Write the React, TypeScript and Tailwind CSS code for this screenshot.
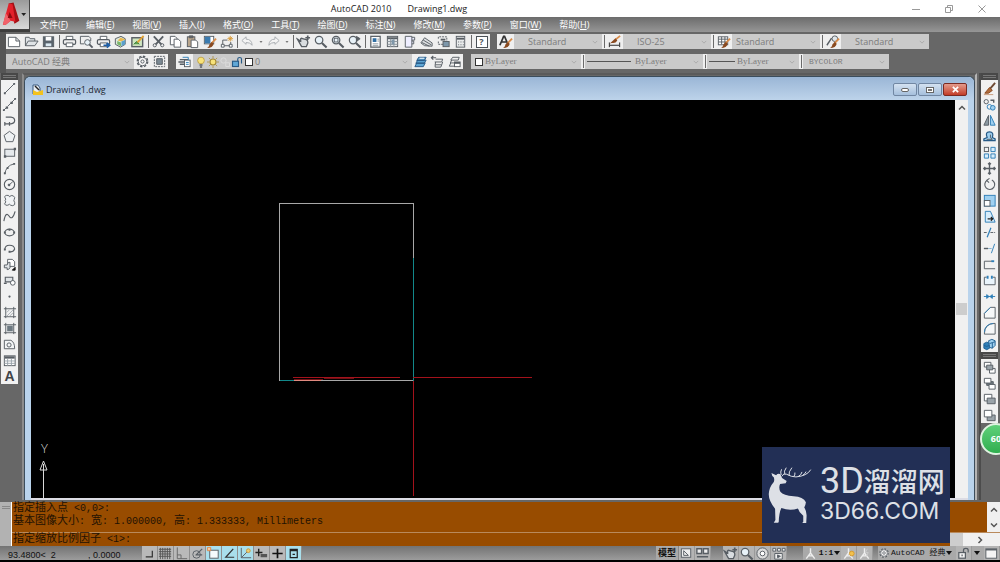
import type { ReactNode } from "react";
import clsx from "clsx";

type Tool = { name: string; icon: ReactNode };

const INK = "#585e64";
const BLUE = "#2f7fb8";
const SKY = "#9fd0f0";
const BROWN = "#8a4a20";

// small shared bits for the icons
const lens = (
  <>
    <circle cx="6.500" cy="6.500" r="4" fill="#e8f2f8" strokeWidth="1.300" />
    <path d="M9.500 9.500l5 5" strokeWidth="2.200" />
  </>
);
const brush = (
  <>
    <path d="M15 5l-5 5" stroke="#d98c4a" strokeWidth="2" />
    <path d="M10.500 8.500l2 2q-1 4.500-7 4.500 2.500-2 2.500-4z" fill={BROWN} stroke="none" />
  </>
);

const fileTools: Tool[] = [
  { name: "New", icon: <path d="M1.500 3.500h8l4 4v6h-12z M9.500 3.500v4h4" fill="#fff" /> },
  {
    name: "Open",
    icon: <path d="M1.500 12.500v-9h4l1 1.500h5v2.500 M1.500 12.500l3-5h10.500l-3.500 5z" fill="#dfe3e6" />,
  },
  {
    name: "Save",
    icon: (
      <>
        <rect x="2.500" y="3" width="11" height="10.500" fill="#59636c" />
        <path d="M5 3h6v4H5z" fill="#fff" stroke="none" />
        <path d="M5 10h6v3H5z" fill="#dbe9f2" stroke="none" />
      </>
    ),
  },
];

const printer = (
  <>
    <path d="M4.500 6V2.500h7V6" fill="#fff" />
    <rect x="1.500" y="6" width="13" height="5" rx="1.500" fill="#eee" strokeWidth="1.300" />
    <path d="M4.500 9.500h7v4h-7z" fill="#fff" />
  </>
);

const plotTools: Tool[] = [
  { name: "Plot", icon: printer },
  {
    name: "Plot preview",
    icon: (
      <>
        <path d="M1.500 2.500h9l2 2v3 M1.500 2.500v8h4" fill="none" />
        <circle cx="9" cy="9" r="3" fill="#e8f2f8" />
        <path d="M11 11l3.500 3.500" strokeWidth="2" />
      </>
    ),
  },
  {
    name: "Publish",
    icon: (
      <>
        {printer}
        <path d="M8 12h5 M11.500 9.500l3 2.500-3 2.500" stroke="#1d5fa8" strokeWidth="1.800" />
      </>
    ),
  },
  {
    name: "3D print",
    icon: (
      <>
        <path d="M2.500 5l6-2.500L13 5v6l-5 3-5.500-3z" fill="#dfe9dc" />
        <path d="M5 7l3-3 5 1.500L9 8z" fill="#e9b94b" stroke="none" />
        <path d="M9 8l4-1.500V11l-4 2z" fill="#5aa0cc" stroke="none" />
        <path d="M4.500 7.500L8.500 9v4l-4-2z" fill="#79b56a" stroke="none" />
      </>
    ),
  },
  {
    name: "Markup",
    icon: (
      <>
        <rect x="2" y="4" width="11.500" height="9.500" fill="#cfe6c0" strokeWidth="1.500" />
        <path d="M4 11l3-3 3 3" fill="#5ba04a" stroke="#3d7d3d" />
        <path d="M14.500 2L8 9" stroke="#e1a235" strokeWidth="2" />
      </>
    ),
  },
];

const clipTools: Tool[] = [
  {
    name: "Cut",
    icon: (
      <>
        <path d="M3 2.500l8 8.500 M13 2.500l-8 8.500" strokeWidth="2" />
        <circle cx="4" cy="12" r="1.700" />
        <circle cx="12" cy="12" r="1.700" />
      </>
    ),
  },
  {
    name: "Copy",
    icon: (
      <>
        <path d="M2.500 2.500h5l2 2v7h-7z" fill="#fff" />
        <path d="M6.500 5.500h4.500l2.500 2.500v6h-7z" fill="#fff" />
      </>
    ),
  },
  {
    name: "Paste",
    icon: (
      <>
        <rect x="2.500" y="3" width="8" height="10.500" fill="#b9a58b" />
        <path d="M4.500 2h4v2h-4z" fill="#666" />
        <path d="M6.500 6.500h5l2 2v6h-7z" fill="#fff" />
      </>
    ),
  },
  {
    name: "Match properties",
    icon: (
      <>
        <rect x="2.500" y="2.500" width="10" height="8" fill="#fff" />
        <path d="M3 3h6v7H3z" fill="#3a7bb0" stroke="none" />
        {brush}
      </>
    ),
  },
  {
    name: "Block editor",
    icon: (
      <>
        <path d="M4 12.500v-6h5 M4 12.500h8.500v-4" />
        <path d="M2.500 11h3v3h-3z M11 11h3v3h-3z" fill="#fff" />
        <path d="M12 2v6 M9 5h6 M10 3l4 4 M14 3l-4 4" stroke="#d99a35" />
      </>
    ),
  },
];

const undoIcon = <path d="M2 7l4.500-4v2.500q6 0 6.500 6.500-2-3-6.500-3V11z" stroke="#a9adb1" fill="#f4f4f4" />;
const redoIcon = <path d="M14 7L9.500 3v2.500q-6 0-6.500 6.500 2-3 6.500-3V11z" stroke="#a9adb1" fill="#f4f4f4" />;

const panIcon = (
  <>
    <path d="M1.500 5.500l3.500 2V5q1-1 2 0l4 1q2 1 1.500 4l-1.500 3.500H6z" fill="#d9dde0" strokeWidth="1.400" />
    <path d="M12.500 1.500v5 M10 4h5" strokeWidth="1.800" />
  </>
);

const zoomTools: Tool[] = [
  { name: "Pan", icon: panIcon },
  { name: "Zoom realtime", icon: lens },
  { name: "Zoom window", icon: <>{lens}<rect x="4.500" y="4.500" width="4" height="4" /></> },
  { name: "Zoom previous", icon: <>{lens}<path d="M10 2.500l4 2.500-4 3z" fill={INK} /></> },
];

const paletteTools: Tool[] = [
  {
    name: "Properties",
    icon: (
      <>
        <rect x="3" y="2.500" width="10" height="11.500" fill="#fff" strokeWidth="1.300" />
        <path d="M5 4.500h4v4H5z" fill="#2f6ea3" stroke="none" />
        <path d="M10 5.500h2 M10 7.500h2 M5 10.500h6 M5 12.500h6" stroke="#8b959d" />
      </>
    ),
  },
  {
    name: "DesignCenter",
    icon: (
      <>
        <rect x="2.500" y="2.500" width="11" height="11" fill="#e5e8ea" />
        <path d="M2.500 4.500h11" strokeWidth="2" />
        <path d="M6 5v9 M9.500 5v9 M2.500 8h11 M2.500 11h11" stroke="#8b959d" />
        <path d="M7 6h3v5H7z" fill="#7f97aa" stroke="none" />
      </>
    ),
  },
  { name: "Tool palettes", icon: <path d="M3.500 2.500h7v11.500h-7z M10.500 3.500h3v3h-3 M10.500 7.500h2v3h-2" fill="#eef" /> },
  {
    name: "Sheet set",
    icon: (
      <>
        <path d="M2 9.500L6 4l8 5.500v3.500l-8-.5z" fill="#dcdfe1" />
        <path d="M4.500 6.500l8.500 5 M3 9l8 4" />
      </>
    ),
  },
  {
    name: "Markup set",
    icon: (
      <>
        <path d="M2.500 5v-2h9v5 M2.500 8v3h5" strokeDasharray="2 1" />
        <rect x="7.500" y="8" width="6.500" height="5.500" fill="#7d97aa" />
        <path d="M5 6h5" strokeWidth="2" />
      </>
    ),
  },
  {
    name: "Calculator",
    icon: (
      <>
        <rect x="3.500" y="2.500" width="9" height="11.500" fill="#e9ebec" />
        <path d="M4 4h8v2H4z" fill={INK} stroke="none" />
        <path d="M5.500 8.500h6 M5.500 11.500h6" strokeDasharray="1 1.500" />
      </>
    ),
  },
];

const drawTools: Tool[] = [
  { name: "Line", icon: <><path d="M3 13L13 3" /><path d="M2 12h2v2H2z M12 2h2v2h-2z" fill={INK} stroke="none" /></> },
  {
    name: "Construction line",
    icon: (
      <>
        <path d="M2 14L14 2" strokeDasharray="5 1" />
        <path d="M4 10h2.500v2.500H4z M9 5h2.500v2.500H9z M1 13h2v2H1z M13 1h2v2h-2z" fill={INK} stroke="none" />
      </>
    ),
  },
  { name: "Polyline", icon: <path d="M4 4.500h5.500q4 .5 4 3.500t-4 3.500H3 M3 9.500v4 M8 9.500v4" strokeWidth="1.300" /> },
  { name: "Polygon", icon: <path d="M8 2.500l5.800 4.300-2.200 6.700H4.400L2.200 6.800z" fill="#eef1f3" /> },
  {
    name: "Rectangle",
    icon: (
      <>
        <rect x="3" y="4.500" width="10.500" height="7.500" fill="#e5e9ec" />
        <path d="M2 11h2.500v2.500H2z M12.500 3H15v2.500h-2.500z" fill={INK} stroke="none" />
      </>
    ),
  },
  {
    name: "Arc",
    icon: (
      <>
        <path d="M3 14Q4 5 13 3" />
        <path d="M2 12h2v2H2z M5 6.500h2v2H5z M12 2h2v2h-2z" fill={INK} stroke="none" />
      </>
    ),
  },
  {
    name: "Circle",
    icon: (
      <>
        <circle cx="8" cy="8" r="5.500" fill="#f5f5f5" strokeWidth="1.200" />
        <path d="M7.500 8.500l4-3.500" />
        <circle cx="7.500" cy="8.500" r="1" fill={INK} />
      </>
    ),
  },
  {
    name: "Revision cloud",
    icon: (
      <path
        d="M4 6.500Q1.500 3 5 2.500q2.500-.5 3 1.500 1.500-2 4-1 2.500 1.500 1 4-1 1 .5 3 1 3-2 3.500-2.500 0-3.500-1.500-1.500 1.500-4 1Q1.500 12 4 9.500 2.500 8 4 6.500z"
        fill="#f1f3f5"
      />
    ),
  },
  { name: "Spline", icon: <path d="M2 13Q4 2 7.500 7.500T14 2.500" strokeWidth="1.200" /> },
  {
    name: "Ellipse",
    icon: (
      <>
        <ellipse cx="8" cy="8" rx="5" ry="3.500" strokeWidth="1.300" />
        <path d="M2 7h2v2H2z M7 4h2v2H7z M12 7h2v2h-2z" fill={INK} stroke="none" />
      </>
    ),
  },
  {
    name: "Ellipse arc",
    icon: (
      <>
        <path d="M3 9.500Q3 4.500 8 4.500t5.500 4Q12 12 8 11.500" strokeWidth="1.200" />
        <path d="M2 8h2v2H2z M7 10.500h2v2H7z" fill={INK} stroke="none" />
      </>
    ),
  },
  {
    name: "Insert block",
    icon: (
      <>
        <path d="M6 2.500h5l2.500 2.500v5H6z" fill="#fff" />
        <path d="M2.500 8.500h3q0-3 3-3v6q-1 2-3 2v-2h-3z" fill="#e0e4e7" />
        <path d="M11 14h3v-3z" fill="#111" stroke="#111" />
      </>
    ),
  },
  {
    name: "Make block",
    icon: (
      <>
        <path d="M3.500 4.500h8v5h-8z" fill="#e0e4e7" strokeWidth="1.200" />
        <circle cx="11.500" cy="10.500" r="2.500" fill="#fff" />
        <path d="M2 11h3" strokeWidth="1.500" />
      </>
    ),
  },
  { name: "Point", icon: <circle cx="8" cy="8" r="1.200" fill={INK} stroke="none" /> },
  {
    name: "Hatch",
    icon: (
      <>
        <path d="M4 2v12 M12.500 2v12 M2 4h13 M2 12.500h13" />
        <path d="M5 12l7-7 M5 8l3-3 M8 12l4-4" stroke="#a5acb1" />
      </>
    ),
  },
  {
    name: "Gradient",
    icon: (
      <>
        <path d="M4 2v12 M12.500 2v12 M2 4h13 M2 12.500h13" />
        <path d="M5.500 5h6v6h-6z" fill="#6c7880" stroke="none" />
      </>
    ),
  },
  {
    name: "Region",
    icon: (
      <>
        <path d="M2.500 3.500h7q4 2 4 9h-11z" fill="#f3f5f6" />
        <circle cx="7.500" cy="8.500" r="2.200" />
      </>
    ),
  },
  {
    name: "Table",
    icon: (
      <>
        <rect x="2.500" y="3" width="11.500" height="10.500" fill="#fff" />
        <path d="M3 3.500h10.500V6H3z" fill={INK} stroke="none" />
        <path d="M6 6v7.500 M10 6v7.500 M2.500 8.500H14 M2.500 11H14" stroke="#9aa4ab" />
      </>
    ),
  },
];

const modifyTools: Tool[] = [
  {
    name: "Erase",
    icon: (
      <>
        <path d="M14 2L8 9" stroke="#6e4a33" strokeWidth="2" />
        <path d="M8 7l3 3-4 3H3z" fill="#b06c3c" stroke={BROWN} />
        <path d="M2 14.500h10" stroke="#c79a7a" />
      </>
    ),
  },
  {
    name: "Copy object",
    icon: (
      <>
        <circle cx="4.500" cy="5" r="2.300" />
        <circle cx="8" cy="10.500" r="2.500" stroke={BLUE} />
        <circle cx="11.500" cy="11.500" r="2.500" stroke={BLUE} fill={SKY} />
        <path d="M9 3.500h3.500V6" strokeWidth="1.500" />
      </>
    ),
  },
  {
    name: "Mirror",
    icon: (
      <>
        <path d="M7 2.500v10.500H2z" fill="#8b98a1" />
        <path d="M9 2.500v10.500h5z" fill={SKY} stroke={BLUE} />
      </>
    ),
  },
  {
    name: "Offset",
    icon: (
      <>
        <path d="M2 12.500h12v-2l-3-1.500Q13 3 8 3T5.500 9L2 10.500z" fill={SKY} stroke="#275a86" strokeWidth="1.300" />
        <path d="M5 11h6q-3-1-2-5" />
      </>
    ),
  },
  {
    name: "Array",
    icon: (
      <>
        <rect x="2.500" y="2.500" width="4.500" height="4.500" />
        <path d="M9.500 2.500H14V7H9.500z M2.500 9.500H7V14H2.500z M9.500 9.500H14V14H9.500z" stroke={BLUE} fill="#d8edfb" />
      </>
    ),
  },
  {
    name: "Move",
    icon: (
      <path
        d="M8 2v12 M2 8h12 M6.500 3.500L8 2l1.500 1.500 M6.500 12.500L8 14l1.500-1.500 M3.500 6.500L2 8l1.500 1.500 M12.500 6.500L14 8l-1.500 1.500"
        strokeWidth="1.500"
      />
    ),
  },
  { name: "Rotate", icon: <path d="M5.500 3.500a5.300 5.300 0 105-.3 M8 1.500L5 3.500 7.500 6" strokeWidth="1.200" /> },
  {
    name: "Scale",
    icon: (
      <>
        <rect x="2.500" y="2.500" width="11.500" height="11.500" stroke={BLUE} fill={SKY} />
        <rect x="2.500" y="8" width="6" height="6" fill="#fff" />
      </>
    ),
  },
  {
    name: "Stretch",
    icon: (
      <>
        <path d="M3.500 2.500H9L14 14H3.500z" stroke={BLUE} fill="#d8edfb" />
        <path d="M6 10.500h5 M9.500 8.500l2 2-2 2" stroke="#222" strokeWidth="1.300" />
      </>
    ),
  },
  { name: "Trim", icon: <><path d="M2 8h4 M9 8h5" strokeDasharray="3 1" /><path d="M9.500 3L5.500 13" stroke={BLUE} strokeWidth="1.300" /></> },
  { name: "Extend", icon: <><path d="M2 8h4.500" strokeWidth="1.500" /><path d="M7 8h3" stroke={BLUE} strokeDasharray="1 1" /><path d="M13.500 3L10 13" stroke={BLUE} /></> },
  { name: "Break at point", icon: <><path d="M11 4.500H2.500v8H14" /><path d="M10 3.500h3v2h-3z" fill={BLUE} stroke="none" /></> },
  { name: "Break", icon: <><path d="M5 4.500H2.500v8H14v-8h-2.500" fill="#eaf4fb" /><path d="M5 3h2v3H5z M9.500 3h2v3h-2z" fill={BLUE} stroke="none" /></> },
  { name: "Join", icon: <path d="M2 8h12 M5 6l2.500 2L5 10z M11 6L8.500 8l2.500 2z" stroke={BLUE} fill={BLUE} /> },
  { name: "Chamfer", icon: <><path d="M2.500 14V9l6.500-6.500h5V14z" fill="#f5f7f8" /><path d="M2.500 9L9 2.500" stroke={BLUE} /></> },
  { name: "Fillet", icon: <><path d="M2.500 14q0-11.500 11.500-11.500V14z" fill="#f5f7f8" /><path d="M2.500 12Q3 3.500 12 2.500" stroke={BLUE} /></> },
  {
    name: "Explode",
    icon: (
      <>
        <path d="M2 7l3-1.500 3 1V12l-3 1.500L2 12z" fill={BLUE} stroke="#1f5f92" />
        <path d="M7 4l3.500-1.500L14 4v5l-3 3-3-1z" fill={SKY} stroke="#1f5f92" />
        <path d="M8 7l3-1 3-1 M11 6v6 M2 9l3 1 3-1" stroke="#1f5f92" />
      </>
    ),
  },
];

const orderTools: Tool[] = [
  {
    name: "Bring to front",
    icon: <><path d="M2.500 2.500h7v5h-7z M8 9h6v5H8z" fill="#fff" /><path d="M5 5.500h6.500v5H5z" fill="#9aa3a9" /></>,
  },
  {
    name: "Send to back",
    icon: <><path d="M5 6h7v4H5z" fill="#6f7980" /><path d="M2.500 2.500h7v5h-7z M7.500 9h6.500v5H7.500z" fill="#fff" /></>,
  },
  {
    name: "Bring above objects",
    icon: <><path d="M2.500 2.500h8v7h-8z" fill="#fff" /><path d="M5.500 6.500H14v6H5.500z" fill="#9aa3a9" /></>,
  },
  {
    name: "Send under objects",
    icon: <><path d="M5.500 7.500H14v6H5.500z" fill="#9aa3a9" /><path d="M2.500 2.500h8v7h-8z" fill="#fff" /></>,
  },
];

const gear = (
  <>
    <circle cx="8" cy="8" r="5.500" fill="#f6f6f6" strokeDasharray="2.500 1.800" strokeWidth="1.600" />
    <circle cx="8" cy="8" r="4.500" fill="#f6f6f6" />
    <circle cx="8" cy="8" r="1.700" />
  </>
);
const lock = (
  <>
    <rect x="3" y="7" width="7" height="6" fill="#f2f2f2" strokeWidth="1.300" />
    <path d="M8 7V4.500q0-2 2.500-2t2.500 2V7 M6.500 9v2" strokeWidth="1.300" />
  </>
);
const scaleFigure = <path d="M8 2.500V8 M8 7.500l-4.500 6 M8 7.500l4.500 6 M6 10.500h4" stroke="#eee" strokeWidth="1.500" />;

const layerIcon = (
  <>
    <path d="M3 6h9 M1.500 8.500h8 M3 11h6" strokeWidth="1.500" />
    <rect x="8" y="6.500" width="6" height="7" fill="#fff" />
    <path d="M9.500 9h3 M9.500 11h3 M6 3.500h6v3" stroke={BLUE} />
  </>
);

const layerTools: Tool[] = [
  {
    name: "Make object layer current",
    icon: (
      <>
        <path d="M6 3.500h8l-2 3.500H4z M5 6.500h9l-2 3.500H3z M4 9.500h9l-2 4H2z" fill="#5fa7d6" stroke="#275a86" />
        <path d="M7 4.500h5" stroke="#fff" />
      </>
    ),
  },
  {
    name: "Layer previous",
    icon: <><path d="M6 5.500h7.500l-1 3H5 M6 8.500l-.5 3h7l1-3 M5.500 11.500V14h6l1-2.500" /><path d="M1.500 4h5 M3.500 2L1.500 4l2 2" strokeWidth="1.300" /></>,
  },
  {
    name: "Layer states",
    icon: <><path d="M6 3.500h7l-1 3H4z M5 6.500L3.500 9.500H8 M4 9.500L2.500 13H8" /><rect x="8" y="8.500" width="6" height="5" fill="#fff" /><path d="M8 9.500h6" strokeWidth="2" /></>,
  },
];

const textStyleIcon = <path d="M2 12L6 2.500h1L11 12 M4 8.500h5" stroke="#333" strokeWidth="1.800" />;

const styleBoxes = [
  { name: "Text style", value: "Standard", pad: "pl-3.5", icon: <>{textStyleIcon}{brush}</> },
  {
    name: "Dimension style",
    value: "ISO-25",
    pad: "pl-3.5",
    icon: (
      <>
        <path d="M2.500 9v5 M13.500 9v5 M3 12h10" stroke="#222" />
        <path d="M14 2L9 6" stroke="#d98c4a" strokeWidth="2" />
        <path d="M9 4.500l2 2.500q-2 3.500-6 2.500l-2 .5z" fill={BROWN} stroke="none" />
      </>
    ),
  },
  {
    name: "Table style",
    value: "Standard",
    pad: "pl-1",
    icon: <><rect x="2.500" y="3" width="10" height="8.500" fill="#fff" /><path d="M2.500 5.500h10 M6 3v8 M9.500 3v8 M2.500 8.500h10" />{brush}</>,
  },
  {
    name: "Multileader style",
    value: "Standard",
    pad: "pl-3.5",
    icon: <><path d="M2 12L7 4.500" strokeWidth="1.500" /><circle cx="10.500" cy="5" r="3" fill="#dfe6ea" />{brush}</>,
  },
];

const menus = [
  ["文件", "F"],
  ["编辑", "E"],
  ["视图", "V"],
  ["插入", "I"],
  ["格式", "O"],
  ["工具", "T"],
  ["绘图", "D"],
  ["标注", "N"],
  ["修改", "M"],
  ["参数", "P"],
  ["窗口", "W"],
  ["帮助", "H"],
];

const modes: (Tool & { on?: boolean })[] = [
  { name: "Snap", icon: <path d="M4 11.500h7V5" stroke="#333" strokeWidth="1.300" /> },
  { name: "Grid", icon: <path d="M2.500 2v12 M5 2v12 M7.500 2v12 M10 2v12 M12.500 2v12 M1 3.500h13 M1 6h13 M1 8.500h13 M1 11h13" stroke="#555" /> },
  { name: "Ortho", icon: <path d="M3.500 1.500v12H14 M3.500 9.500h4v4" stroke="#666" /> },
  { name: "Polar", icon: <><circle cx="7" cy="9" r="4" /><path d="M6 10l7-7 M7 9.500h6" strokeWidth="1.300" /></> },
  { name: "Object snap", on: true, icon: <><rect x="4" y="4.500" width="9" height="8.500" fill="#f5fbfd" /><path d="M1.500 1.500H5V5H1.500z" stroke="#e08a4a" fill="#f6c9a2" /></> },
  { name: "Object snap tracking", on: true, icon: <path d="M12 3L4 12h9" stroke="#333" strokeWidth="1.300" /> },
  { name: "Dynamic UCS", on: true, icon: <><path d="M3.500 2v10.500H14 M3.500 12.500l6-6" /><circle cx="11" cy="5" r="2" fill="#e8cd7a" stroke="#d09a35" /></> },
  { name: "Dynamic input", icon: <><path d="M5 3v8 M1.500 7H9" stroke="#222" strokeWidth="1.500" /><path d="M7 8.500h7v3.500H7z" fill="#555" stroke="none" /></> },
  { name: "Lineweight", icon: <path d="M8 3v10 M2.500 8h11" stroke="#111" strokeWidth="1.800" /> },
  { name: "Quick properties", on: true, icon: <path d="M4.500 3.500h7.500v9H4.500z M4.500 5h7.500 M7 9h2.500" stroke="#222" strokeWidth="1.300" /> },
];

function Icon({ children, small }: { children: ReactNode; small?: boolean }) {
  return (
    <svg
      viewBox="0 0 16 16"
      className={clsx("shrink-0", small ? "size-3" : "size-[15px]")}
      fill="none"
      stroke={INK}
      aria-hidden="true"
    >
      {children}
    </svg>
  );
}

function IconButton({ tool, className }: { tool: Tool; className?: string }) {
  return (
    <button
      type="button"
      aria-label={tool.name}
      className={clsx("flex shrink-0 items-center justify-center hover:bg-white", className ?? "h-[15px] w-[17px]")}
    >
      <Icon>{tool.icon}</Icon>
    </button>
  );
}

function Tools({ items }: { items: Tool[] }) {
  return (
    <div className="flex">
      {items.map((it) => (
        <IconButton key={it.name} tool={it} />
      ))}
    </div>
  );
}

function Divider() {
  return (
    <div className="flex w-1 shrink-0 justify-center py-px">
      <span className="w-px bg-[#6a6a6a]" />
    </div>
  );
}

function Chevron() {
  return (
    <svg viewBox="0 0 8 8" className="pointer-events-none mr-1 size-1.5 shrink-0" fill="none" stroke="#a2a2a2">
      <path d="M1 2.500l3 3 3-3" />
    </svg>
  );
}

function Combo({
  label,
  value,
  className,
  children,
}: {
  label: string;
  value: string;
  className?: string;
  children?: ReactNode;
}) {
  return (
    <div className={clsx("flex h-[15px] shrink-0 items-center bg-[#cacaca] text-[#7c7c7c]", className)}>
      {children}
      <select aria-label={label} className="h-full min-w-0 flex-1 appearance-none bg-transparent leading-none">
        <option>{value}</option>
      </select>
      <Chevron />
    </div>
  );
}

function DropArrow({ name, dark }: { name: string; dark?: boolean }) {
  return (
    <button type="button" aria-label={name} className="flex w-[9px] shrink-0 items-center justify-center">
      <svg viewBox="0 0 6 4" className={dark ? "h-1 w-1.5" : "h-0.5 w-1"} fill={dark ? "#111" : "#777"}>
        <path d="M0 0h6L3 4z" />
      </svg>
    </button>
  );
}

function Header() {
  return (
    <header className="flex h-8 bg-[#3d3d3d]">
      <button
        type="button"
        aria-label="Application menu"
        className="flex h-[30px] w-[30px] shrink-0 items-center border-r border-b border-[#444] bg-linear-to-b from-[#9a9a9a] to-[#dadada]"
      >
        <svg viewBox="0 0 30 30" className="size-[30px]">
          <path d="M9 3l5-1 6 19-5 3z" fill="#a50f14" />
          <path d="M3 25L9 3l4 1 3 18-5-1-5 4z" fill="#e3202a" />
          <path d="M3 25l3-12 5 8-5 4z" fill="#f0626a" />
          <path d="M10 12l3 6H8z" fill="#8c0b10" />
          <path d="M22 13h5l-2.500 3z" fill="#222" />
        </svg>
      </button>
      <div className="flex min-w-0 flex-1 flex-col">
        <div className="flex h-[17px] items-center bg-white">
          <h1 className="flex flex-1 justify-center gap-4 pr-58 text-[9px] text-[#222]">
            <span>AutoCAD 2010</span>
            <span>Drawing1.dwg</span>
          </h1>
          <div className="absolute right-0 flex pr-0.5">
            <button type="button" aria-label="Minimize" className="flex w-[33px] justify-center">
              <svg viewBox="0 0 10 10" className="size-2.5" fill="none" stroke="#999"><path d="M1 5.500h8" /></svg>
            </button>
            <button type="button" aria-label="Restore" className="flex w-[33px] justify-center">
              <svg viewBox="0 0 10 10" className="size-2.5" fill="none" stroke="#999"><path d="M1.500 3.500h5v5h-5z M3.500 3.500v-2h5v5h-2" /></svg>
            </button>
            <button type="button" aria-label="Close" className="flex w-[33px] justify-center">
              <svg viewBox="0 0 10 10" className="size-2.5" fill="none" stroke="#999"><path d="M1.500 1.500l7 7 M8.500 1.500l-7 7" /></svg>
            </button>
          </div>
        </div>
        <nav className="flex h-[15px] items-center gap-[18px] bg-linear-to-b from-[#6c6c6c] to-[#969696] pl-2.5 text-[9px] leading-none text-white">
          {menus.map(([label, key]) => (
            <button key={key} type="button" className="shrink-0">
              {label}(<u>{key}</u>)
            </button>
          ))}
        </nav>
      </div>
    </header>
  );
}

function StandardToolbar() {
  return (
    <div className="flex">
      <div className="flex bg-[#efefef]">
        <Tools items={fileTools} />
        <Divider />
        <Tools items={plotTools} />
        <Divider />
        <Tools items={clipTools} />
        <Divider />
        <IconButton tool={{ name: "Undo", icon: undoIcon }} />
        <DropArrow name="Undo list" />
        <IconButton tool={{ name: "Redo", icon: redoIcon }} />
        <DropArrow name="Redo list" />
        <Divider />
        <Tools items={zoomTools} />
        <Divider />
        <Tools items={paletteTools} />
        <Divider />
        <button
          type="button"
          aria-label="Help"
          className="flex h-[15px] w-[17px] items-center justify-center"
        >
          <span className="flex size-3 items-center justify-center border border-[#4b5157] bg-white text-[9px] leading-none font-bold text-[#4b5157]">
            ?
          </span>
        </button>
      </div>
      <div className="ml-[7px] flex">
        {styleBoxes.map((it, idx) => (
          <div key={it.name} className="flex bg-[#efefef]">
            {idx > 0 && <Divider />}
            <IconButton tool={{ name: it.name, icon: it.icon }} />
            <Combo label={`${it.name} list`} value={it.value} className={clsx("w-[88px] text-[9px]", it.pad)} />
          </div>
        ))}
      </div>
    </div>
  );
}

function LayerToolbar() {
  return (
    <div className="flex">
      <div className="flex bg-[#efefef]">
        <Combo label="Workspace" value="AutoCAD 经典" className="w-[128px] pl-1.5 text-[9px]" />
        <Tools
          items={[
            { name: "Workspace settings", icon: gear },
            {
              name: "My workspace",
              icon: <><path d="M2.500 2.500h11v11h-11z" strokeDasharray="2 1" /><path d="M5 5h6v6H5z" fill="#7c8a94" /></>,
            },
          ]}
        />
      </div>
      <div className="ml-2 flex bg-[#efefef]">
        <IconButton tool={{ name: "Layer properties", icon: layerIcon }} />
        <Combo label="Layer" value="0" className="w-[219px] pl-0.5 text-[9px]">
          <Icon small>
            <circle cx="8" cy="6" r="4.500" fill="#f7e27a" stroke="#b5963a" />
            <path d="M6 12h4 M6.500 14.500h3" strokeWidth="2" />
          </Icon>
          <Icon small>
            <circle cx="8" cy="8" r="4" fill="#f7e27a" stroke="#a58a35" strokeWidth="1.500" />
            <path d="M8 0v3 M8 13v3 M0 8h3 M13 8h3 M2.500 2.500l2 2 M11.500 11.500l2 2 M2.500 13.500l2-2 M11.500 4.500l2-2" stroke="#a58a35" />
          </Icon>
          <Icon small>
            <circle cx="6" cy="6" r="3.500" stroke="#e2e2e2" />
            <path d="M9 9h5v5H9z" stroke="#e2e2e2" />
          </Icon>
          <Icon small>
            <rect x="2" y="7" width="8" height="7" fill="#5fa7d6" stroke="#275a86" strokeWidth="1.500" />
            <path d="M9 7V4q0-2 2.500-2T14 4v6" stroke="#275a86" strokeWidth="1.500" />
          </Icon>
          <span className="mx-0.5 size-2 shrink-0 border border-[#333] bg-white" />
        </Combo>
        <Tools items={layerTools} />
      </div>
      <div className="ml-2 flex bg-[#efefef] font-['Liberation_Serif',serif]">
        <Combo label="Color" value="ByLayer" className="w-[110px] pl-1 text-[9px]">
          <span className="mr-0.5 size-2 shrink-0 border border-[#333] bg-white" />
        </Combo>
        <Divider />
        <Combo label="Linetype" value="ByLayer" className="w-[118px] pl-0.5 text-[9px]">
          <span className="mr-1 h-px w-11 shrink-0 bg-[#555]" />
        </Combo>
        <Divider />
        <Combo label="Lineweight" value="ByLayer" className="w-[92px] pl-0.5 text-[9px]">
          <span className="mr-0.5 h-px w-[26px] shrink-0 bg-[#555]" />
        </Combo>
        <Divider />
        <Combo
          label="Plot style"
          value="BYCOLOR"
          className="w-[86px] pl-1.5 font-['Liberation_Mono',monospace] text-[8px]"
        />
      </div>
    </div>
  );
}

function Grip() {
  return (
    <div className="flex h-[7px] flex-col justify-center gap-px bg-[#484848] px-0.5">
      <span className="h-px bg-[#777]" />
      <span className="h-px bg-[#777]" />
    </div>
  );
}

function SideTools({ items, children }: { items: Tool[]; children?: ReactNode }) {
  return (
    <div>
      <Grip />
      <div className="flex flex-col bg-[#f1f1f1]">
        {items.map((it) => (
          <IconButton key={it.name} tool={it} className="h-4 w-[17px]" />
        ))}
        {children}
      </div>
    </div>
  );
}

// model space: the selected block, the crosshair and the UCS icon
function Canvas() {
  return (
    <div className="relative min-w-0 flex-1 bg-black">
      <svg className="absolute inset-0 h-full w-full" fill="none" shapeRendering="crispEdges">
        <path d="M248.500 103.500h134v177h-134z" stroke="#a8a8a8" />
        <path d="M382.500 158v123 M249 280.500h14" stroke="#12888a" />
        <path d="M263 280.500h27" stroke="#e08a80" />
        <path d="M262 277.500h107 M382 277.500h119" stroke="#a3121b" />
        <path d="M263 279.500l60-1" stroke="#701015" />
        <path d="M382.500 281v115" stroke="#a3121b" />
        <g shapeRendering="auto">
          <path d="M12.500 361l-3.500 9h7z M12.500 364v34" stroke="#d8d8d8" />
          <text x="10" y="353" fill="#d8d8d8" className="text-[13px] font-light">
            Y
          </text>
        </g>
      </svg>
    </div>
  );
}

function DrawingWindow() {
  const button = "flex h-[13px] w-6 items-center justify-center rounded-xs border";
  return (
    <section className="flex min-w-0 flex-1 flex-col border-2 border-b-0 border-[#5b5b5b] border-r-[#b5b5b5] border-l-[#8c8c8c] pt-px">
      <div className="flex flex-1 flex-col rounded-t-md border-x border-t border-[#3c4d5c] bg-[#b9d3ec]">
        <div className="flex h-[23px] items-center rounded-t-md bg-linear-to-b from-[#9ab6d6] to-[#bdd3ea] px-[7px] pt-0.5">
          <svg viewBox="0 0 12 12" className="mr-0.5 size-3">
            <path d="M1 1h5l2 3v6H1z" fill="#e8eef4" stroke="#3b5a80" />
            <path d="M1 11V6l4 2 6-2v5z" fill="#f3c21d" />
            <path d="M3 2l4 4" stroke="#222" strokeWidth="1.500" />
          </svg>
          <h2 className="flex-1 text-[9px] text-[#1c2733]">Drawing1.dwg</h2>
          <div className="flex gap-px">
            <button type="button" aria-label="Minimize drawing" className={clsx(button, "border-[#7187a3] bg-linear-to-b from-[#d4e2f1] to-[#a5bfdc]")}>
              <span className="h-1 w-2 rounded-xs border border-[#666] bg-white" />
            </button>
            <button type="button" aria-label="Maximize drawing" className={clsx(button, "border-[#7187a3] bg-linear-to-b from-[#d4e2f1] to-[#a5bfdc]")}>
              <span className="flex h-1.5 w-2 items-center justify-center border border-[#666] bg-white">
                <span className="h-0.5 w-1 bg-[#777]" />
              </span>
            </button>
            <button type="button" aria-label="Close drawing" className={clsx(button, "border-[#7a2a22] bg-linear-to-b from-[#e39a8c] to-[#c23a26]")}>
              <svg viewBox="0 0 8 8" className="size-[7px]" stroke="#fff" strokeWidth="2"><path d="M1 1l6 6 M7 1L1 7" /></svg>
            </button>
          </div>
        </div>
        <div className="mr-[6px] ml-[6px] flex flex-1 border-b-2 border-[#dcdce4]">
          <Canvas />
          <div className="flex w-[13px] flex-col items-center bg-[#f0f0f0]">
            <svg viewBox="0 0 8 8" className="mt-1 mb-2 size-2 shrink-0" fill="none" stroke="#555" strokeWidth="1.500"><path d="M1 5.500l3-3 3 3" /></svg>
            <div className="flex-1" />
            <div className="h-3 w-[11px] bg-[#cdcdcd]" />
            <div className="flex-1" />
          </div>
        </div>
      </div>
    </section>
  );
}

function CommandLine() {
  const arrow = "size-2";
  return (
    <section className="mt-0.5 flex h-11 shrink-0">
      <div className="flex w-3 shrink-0 justify-center border-r border-white bg-[#b2b2b2] pt-1">
        <span className="h-[3px] w-2 border-y border-[#888]" />
      </div>
      <div className="flex min-w-0 flex-1 flex-col bg-[#984c00] font-['Liberation_Mono','Noto_Sans_CJK_SC',monospace] text-[10px] leading-3 text-[#231203]">
        <div className="flex flex-1">
          <div className="flex-1 pl-px whitespace-pre">
            <p><span className="text-[11px]">指定插入点</span> {"<0,0>:"}</p>
            <p>
              <span className="text-[11px]">基本图像大小</span>: <span className="text-[11px]">宽</span>: 1.000000,{" "}
              <span className="text-[11px]">高</span>: 1.333333, Millimeters
            </p>
          </div>
          <div className="flex w-[13px] flex-col items-center justify-around bg-[#f0f0f0]">
            <svg viewBox="0 0 8 8" className={arrow} fill="none" stroke="#555" strokeWidth="1.500"><path d="M1 5.500l3-3 3 3" /></svg>
            <svg viewBox="0 0 8 8" className={arrow} fill="none" stroke="#555" strokeWidth="1.500"><path d="M1 2.500l3 3 3-3" /></svg>
          </div>
        </div>
        <div className="flex h-3.5 border-t border-[#b98a5c] pl-px">
          <label htmlFor="command" className="shrink-0 whitespace-pre">
            <span className="text-[11px]">指定缩放比例因子</span> {"<1>:"}
          </label>
          <input id="command" type="text" className="min-w-0 flex-1 bg-transparent pl-1 outline-none" />
          <div className="flex w-[50px] shrink-0 items-center justify-between bg-[#f0f0f0] pr-4">
            <span className="h-full w-[13px] bg-[#cdcdcd]" />
            <svg viewBox="0 0 8 8" className={arrow} fill="none" stroke="#555" strokeWidth="1.500"><path d="M2.500 1l3 3-3 3" /></svg>
          </div>
        </div>
      </div>
    </section>
  );
}

function StatusBar() {
  const cell = "flex h-3.5 w-4 shrink-0 items-center justify-center bg-[#b4b4b4] border-r border-[#9a9a9a]";
  const text = "flex h-3.5 shrink-0 items-center bg-[#a9a9a9] text-[#111]";
  return (
    <footer className="flex h-4 shrink-0 border-b-2 border-black bg-linear-to-b from-[#737373] to-[#9c9c9c] font-['Liberation_Mono','Noto_Sans_CJK_SC',monospace] text-[8px] leading-none">
      <p className="flex w-[142px] shrink-0 items-center pt-1 pl-2 font-['Liberation_Sans',sans-serif] text-[9px] whitespace-pre text-[#111]">
        <span className="w-20">{"93.4800<  2"}</span>
        <span>, 0.0000</span>
      </p>
      <div className="flex">
        {modes.map((it) => (
          <button
            key={it.name}
            type="button"
            aria-label={it.name}
            aria-pressed={!!it.on}
            className={clsx(
              "flex h-3.5 w-4 items-center justify-center border-r border-[#8f8f8f]",
              it.on ? "bg-[#a9dfec]" : "bg-[#b9b9b9]"
            )}
          >
            <Icon>{it.icon}</Icon>
          </button>
        ))}
      </div>
      <div className="flex-1" />
      <button type="button" className={clsx(text, "w-[23px] justify-center border-r border-[#888] pt-0.5 text-[9px] font-bold")}>
        模型
      </button>
      <IconButton className={cell} tool={{ name: "Layout", icon: <><rect x="2.500" y="3" width="10" height="9" fill="#eee" /><path d="M5 5v5h5z" /></> }} />
      <IconButton className={cell} tool={{ name: "Quick view", icon: <path d="M2 3h5v5H2z M9 3h5v5H9z M2 11.500h12" fill="#eee" strokeWidth="1.500" /> }} />
      <div className="w-3 shrink-0" />
      <IconButton className={cell} tool={{ name: "Pan view", icon: panIcon }} />
      <IconButton className={cell} tool={{ name: "Zoom view", icon: lens }} />
      <IconButton className={cell} tool={{ name: "Steering wheel", icon: <><circle cx="8" cy="8" r="6" fill="#ddd" /><circle cx="8" cy="8" r="2.500" fill="#fff" /></> }} />
      <IconButton className={cell} tool={{ name: "Show motion", icon: <><path d="M2 2.500h3v3H2z M7 2.500h3v3H7z M12 2.500h3v3h-3z M4 8h8v6H4z" fill="#eee" /><path d="M7 9.500l3 1.500-3 1.500z" fill={INK} /></> }} />
      <div className="w-4 shrink-0" />
      <button type="button" aria-label="Annotation scale" className={clsx(text, "w-[38px]")}>
        <Icon>{scaleFigure}</Icon>
        <span className="flex-1 font-bold">1:1</span>
        <svg viewBox="0 0 6 4" className="mr-px h-1 w-1.5 shrink-0" fill="#111"><path d="M0 0h6L3 4z" /></svg>
      </button>
      <IconButton className={cell} tool={{ name: "Annotation visibility", icon: <>{scaleFigure}<circle cx="11.500" cy="8" r="2.500" fill="#f2c14d" stroke="#d79a2a" /></> }} />
      <IconButton className={cell} tool={{ name: "Auto scale", icon: <>{scaleFigure}<path d="M11 3l-2 4h3l-2 4" stroke="#ccc" /></> }} />
      <div className="w-[5px] shrink-0" />
      <button type="button" className={clsx(text, "w-[78px] gap-px")}>
        <Icon small>{gear}</Icon>
        <span className="whitespace-nowrap">AutoCAD 经典</span>
        <svg viewBox="0 0 6 4" className="h-1 w-1.5 shrink-0" fill="#111"><path d="M0 0h6L3 4z" /></svg>
      </button>
      <IconButton className={cell} tool={{ name: "Lock toolbars", icon: lock }} />
      <div className="flex w-3 bg-[#a9a9a9]">
        <DropArrow dark name="Status bar menu" />
      </div>
      <IconButton className={cell} tool={{ name: "Clean screen", icon: <><rect x="2" y="3" width="11.500" height="10" fill="#f4f4f4" /><path d="M2 4h11.500" strokeWidth="1.500" /></> }} />
    </footer>
  );
}

function Watermark() {
  return (
    <div className="absolute right-[50px] bottom-[19px] flex h-24 w-[188px] items-center gap-2 bg-[#222f55] pl-1.5 whitespace-nowrap text-[#dde0e6]">
      <svg viewBox="385 100 130 175" className="h-[58px] w-11 shrink-0" fill="currentColor">
        <path d="M394 121l14 7q6-7 13-3l5 11 14 9-3 7-17 2q-5 12 1 24 9 12 40 13 29 1 37 18-1 9-5 16 8 12 7 27l-1 20h-12l3-4v-18q-13-10-16-22-24 8-50-1-7 14-8 42l-2 2h-13l5-8-1-34q-20-25-19-45 1-20 15-36 3-7 0-14-6-4-7-13z" />
        <g fill="none" stroke="currentColor" strokeWidth="3" strokeLinecap="round">
          <path d="M426 130q4-10 14-5 14 8 28 8 34-3 44-21" />
          <path d="M423 126q-3-8 1-15 M434 124q-4-8 4-18 M447 128q-2-10 8-22 M462 131q4-3 3-10 M476 131q8-4 10-12 M490 127q6-3 8-9" />
        </g>
      </svg>
      <div className="flex flex-col pb-1">
        <p className="flex items-center text-[27px] leading-9 font-medium">
          <span className="font-['Roboto',sans-serif] text-[36px] font-normal">3D</span>
          <span className="font-['Noto_Sans_CJK_SC',sans-serif]">溜溜网</span>
        </p>
        <p className="font-['Inter',sans-serif] text-[23px] leading-6">3D66.COM</p>
      </div>
    </div>
  );
}

export default function App() {
  return (
    <div className="relative flex min-h-screen flex-col overflow-hidden bg-[#676767] font-['Open_Sans','Noto_Sans_CJK_SC',sans-serif]">
      <Header />
      <div className="flex flex-col gap-[5px] border-l-6 border-[#555] pt-0.5 pb-1">
        <StandardToolbar />
        <LayerToolbar />
      </div>
      <main className="relative flex flex-1">
        <aside className="mr-1 ml-px flex w-[17px] shrink-0 flex-col">
          <SideTools items={drawTools}>
            <button
              type="button"
              aria-label="Multiline text"
              className="h-4 font-['Liberation_Sans',sans-serif] text-[14px] leading-4 font-bold text-[#3f4347]"
            >
              A
            </button>
          </SideTools>
        </aside>
        <DrawingWindow />
        <aside className="mr-0.5 ml-0.5 flex w-[19px] shrink-0 flex-col border-l-2 border-[#4c4c4c]">
          <SideTools items={modifyTools} />
          <SideTools items={orderTools} />
        </aside>
        <div className="absolute -right-3 bottom-[45px] flex size-8 items-center justify-center rounded-full border-2 border-[#dff3e0] bg-linear-to-b from-[#5fd17a] to-[#2fae4f] text-[9px] font-bold text-white">
          60
        </div>
      </main>
      <CommandLine />
      <StatusBar />
      <Watermark />
    </div>
  );
}
